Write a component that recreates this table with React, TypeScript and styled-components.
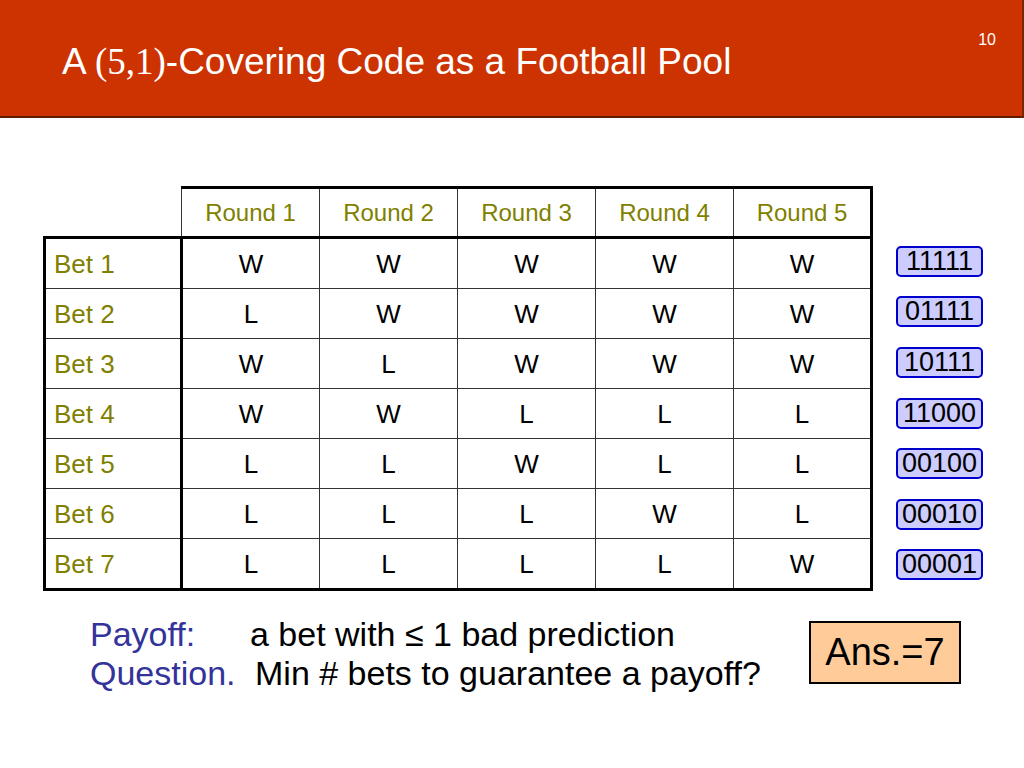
import React from "react";
import styled, { createGlobalStyle } from "styled-components";

const Global = createGlobalStyle`
  html, body { margin: 0; padding: 0; background: #ffffff; }
  body { font-family: "Liberation Sans", Arial, sans-serif; }
`;

const Page = styled.div`
  width: 1024px;
  height: 768px;
  background: #ffffff;
  overflow: hidden;
  display: flex;
  flex-direction: column;
`;

const Header = styled.header`
  position: relative;
  height: 116px;
  background: #cc3300;
  border-bottom: 2px solid #5e1c00;
  border-right: 2px solid #7a2400;
  box-sizing: content-box;
  width: 1022px;
  display: flex;
  align-items: flex-start;
`;

const Title = styled.h1`
  margin: 40px 0 0 62px;
  font-family: "Liberation Sans", Arial, sans-serif;
  font-weight: normal;
  font-size: 37px;
  line-height: 44px;
  color: #ffffff;
  white-space: nowrap;
`;

const SerifPart = styled.span`
  font-family: "Liberation Serif", "Times New Roman", serif;
`;

const PageNum = styled.span`
  position: absolute;
  right: 26px;
  top: 31px;
  font-size: 16px;
  color: #ffffff;
`;

const TableArea = styled.section`
  display: flex;
  align-items: flex-start;
  margin: 68px 0 0 43px;
`;

const Grid = styled.table`
  border-collapse: collapse;
  table-layout: fixed;
  width: 827px;
`;

const Th = styled.th<{ $corner?: boolean; $last?: boolean }>`
  height: 47px;
  padding: 0;
  font-weight: normal;
  font-size: 24px;
  color: #7f7f00;
  text-align: center;
  border-top: ${(p) => (p.$corner ? "none" : "3px solid #000")};
  border-left: ${(p) => (p.$corner ? "none" : "1px solid #333")};
  border-right: ${(p) => (p.$last ? "3px solid #000" : "1px solid #333")};
  border-bottom: 3px solid #000;
`;

const Label = styled.td<{ $lastRow?: boolean }>`
  height: 48px;
  padding: 1px 0 0 8px;
  font-size: 26px;
  color: #7f7f00;
  text-align: left;
  border-left: 3px solid #000;
  border-right: 3px solid #000;
  border-bottom: ${(p) => (p.$lastRow ? "3px solid #000" : "1px solid #333")};
`;

const Cell = styled.td<{ $last?: boolean; $lastRow?: boolean }>`
  height: 48px;
  padding: 1px 0 0 0;
  font-size: 26px;
  color: #000;
  text-align: center;
  border-right: ${(p) => (p.$last ? "3px solid #000" : "1px solid #333")};
  border-bottom: ${(p) => (p.$lastRow ? "3px solid #000" : "1px solid #333")};
`;

const Codes = styled.div`
  display: flex;
  flex-direction: column;
  margin-left: 23px;
  padding-top: 50px;
`;

const CodeSlot = styled.div`
  height: 50.6px;
  display: flex;
  align-items: center;
`;

const Code = styled.span`
  box-sizing: border-box;
  width: 87px;
  height: 31px;
  display: flex;
  align-items: center;
  justify-content: center;
  background: #ccccff;
  border: 2px solid #0000cc;
  border-radius: 5px;
  font-size: 27px;
  color: #000;
`;

const Bottom = styled.section`
  display: flex;
  align-items: flex-start;
  margin-top: 24px;
  padding-left: 90px;
`;

const Lines = styled.div`
  display: flex;
  flex-direction: column;
`;

const Line = styled.div`
  display: flex;
  font-size: 34px;
  line-height: 39px;
  white-space: nowrap;
`;

const Key = styled.span<{ $w: number }>`
  width: ${(p) => p.$w}px;
  color: #333399;
`;

const Text = styled.span`
  color: #000;
`;

const Answer = styled.div`
  box-sizing: border-box;
  margin: 6px 63px 0 auto;
  width: 152px;
  height: 63px;
  background: #ffcc99;
  border: 2px solid #000;
  display: flex;
  align-items: center;
  justify-content: center;
  font-size: 38px;
  color: #000;
`;

const rounds = [1, 2, 3, 4, 5];
const bets: string[] = ["WWWWW", "LWWWW", "WLWWW", "WWLLL", "LLWLL", "LLLWL", "LLLLW"];
const codes = ["11111", "01111", "10111", "11000", "00100", "00010", "00001"];

export default function App() {
  return (
    <Page>
      <Global />
      <Header>
        <Title>
          A <SerifPart>(5,1)</SerifPart>-Covering Code as a Football Pool
        </Title>
        <PageNum>10</PageNum>
      </Header>
      <TableArea>
        <Grid>
          <colgroup>
            <col style={{ width: 137 }} />
            {rounds.map((r) => (
              <col key={r} style={{ width: 138 }} />
            ))}
          </colgroup>
          <thead>
            <tr>
              <Th $corner />
              {rounds.map((r, i) => (
                <Th key={r} $last={i === 4}>
                  Round {r}
                </Th>
              ))}
            </tr>
          </thead>
          <tbody>
            {bets.map((b, ri) => (
              <tr key={ri}>
                <Label $lastRow={ri === bets.length - 1}>Bet {ri + 1}</Label>
                {b.split("").map((c, ci) => (
                  <Cell key={ci} $last={ci === 4} $lastRow={ri === bets.length - 1}>
                    {c}
                  </Cell>
                ))}
              </tr>
            ))}
          </tbody>
        </Grid>
        <Codes>
          {codes.map((c) => (
            <CodeSlot key={c}>
              <Code>{c}</Code>
            </CodeSlot>
          ))}
        </Codes>
      </TableArea>
      <Bottom>
        <Lines>
          <Line>
            <Key $w={160}>Payoff:</Key>
            <Text>a bet with ≤ 1 bad prediction</Text>
          </Line>
          <Line>
            <Key $w={165}>Question.</Key>
            <Text>Min # bets to guarantee a payoff?</Text>
          </Line>
        </Lines>
        <Answer>Ans.=7</Answer>
      </Bottom>
    </Page>
  );
}
